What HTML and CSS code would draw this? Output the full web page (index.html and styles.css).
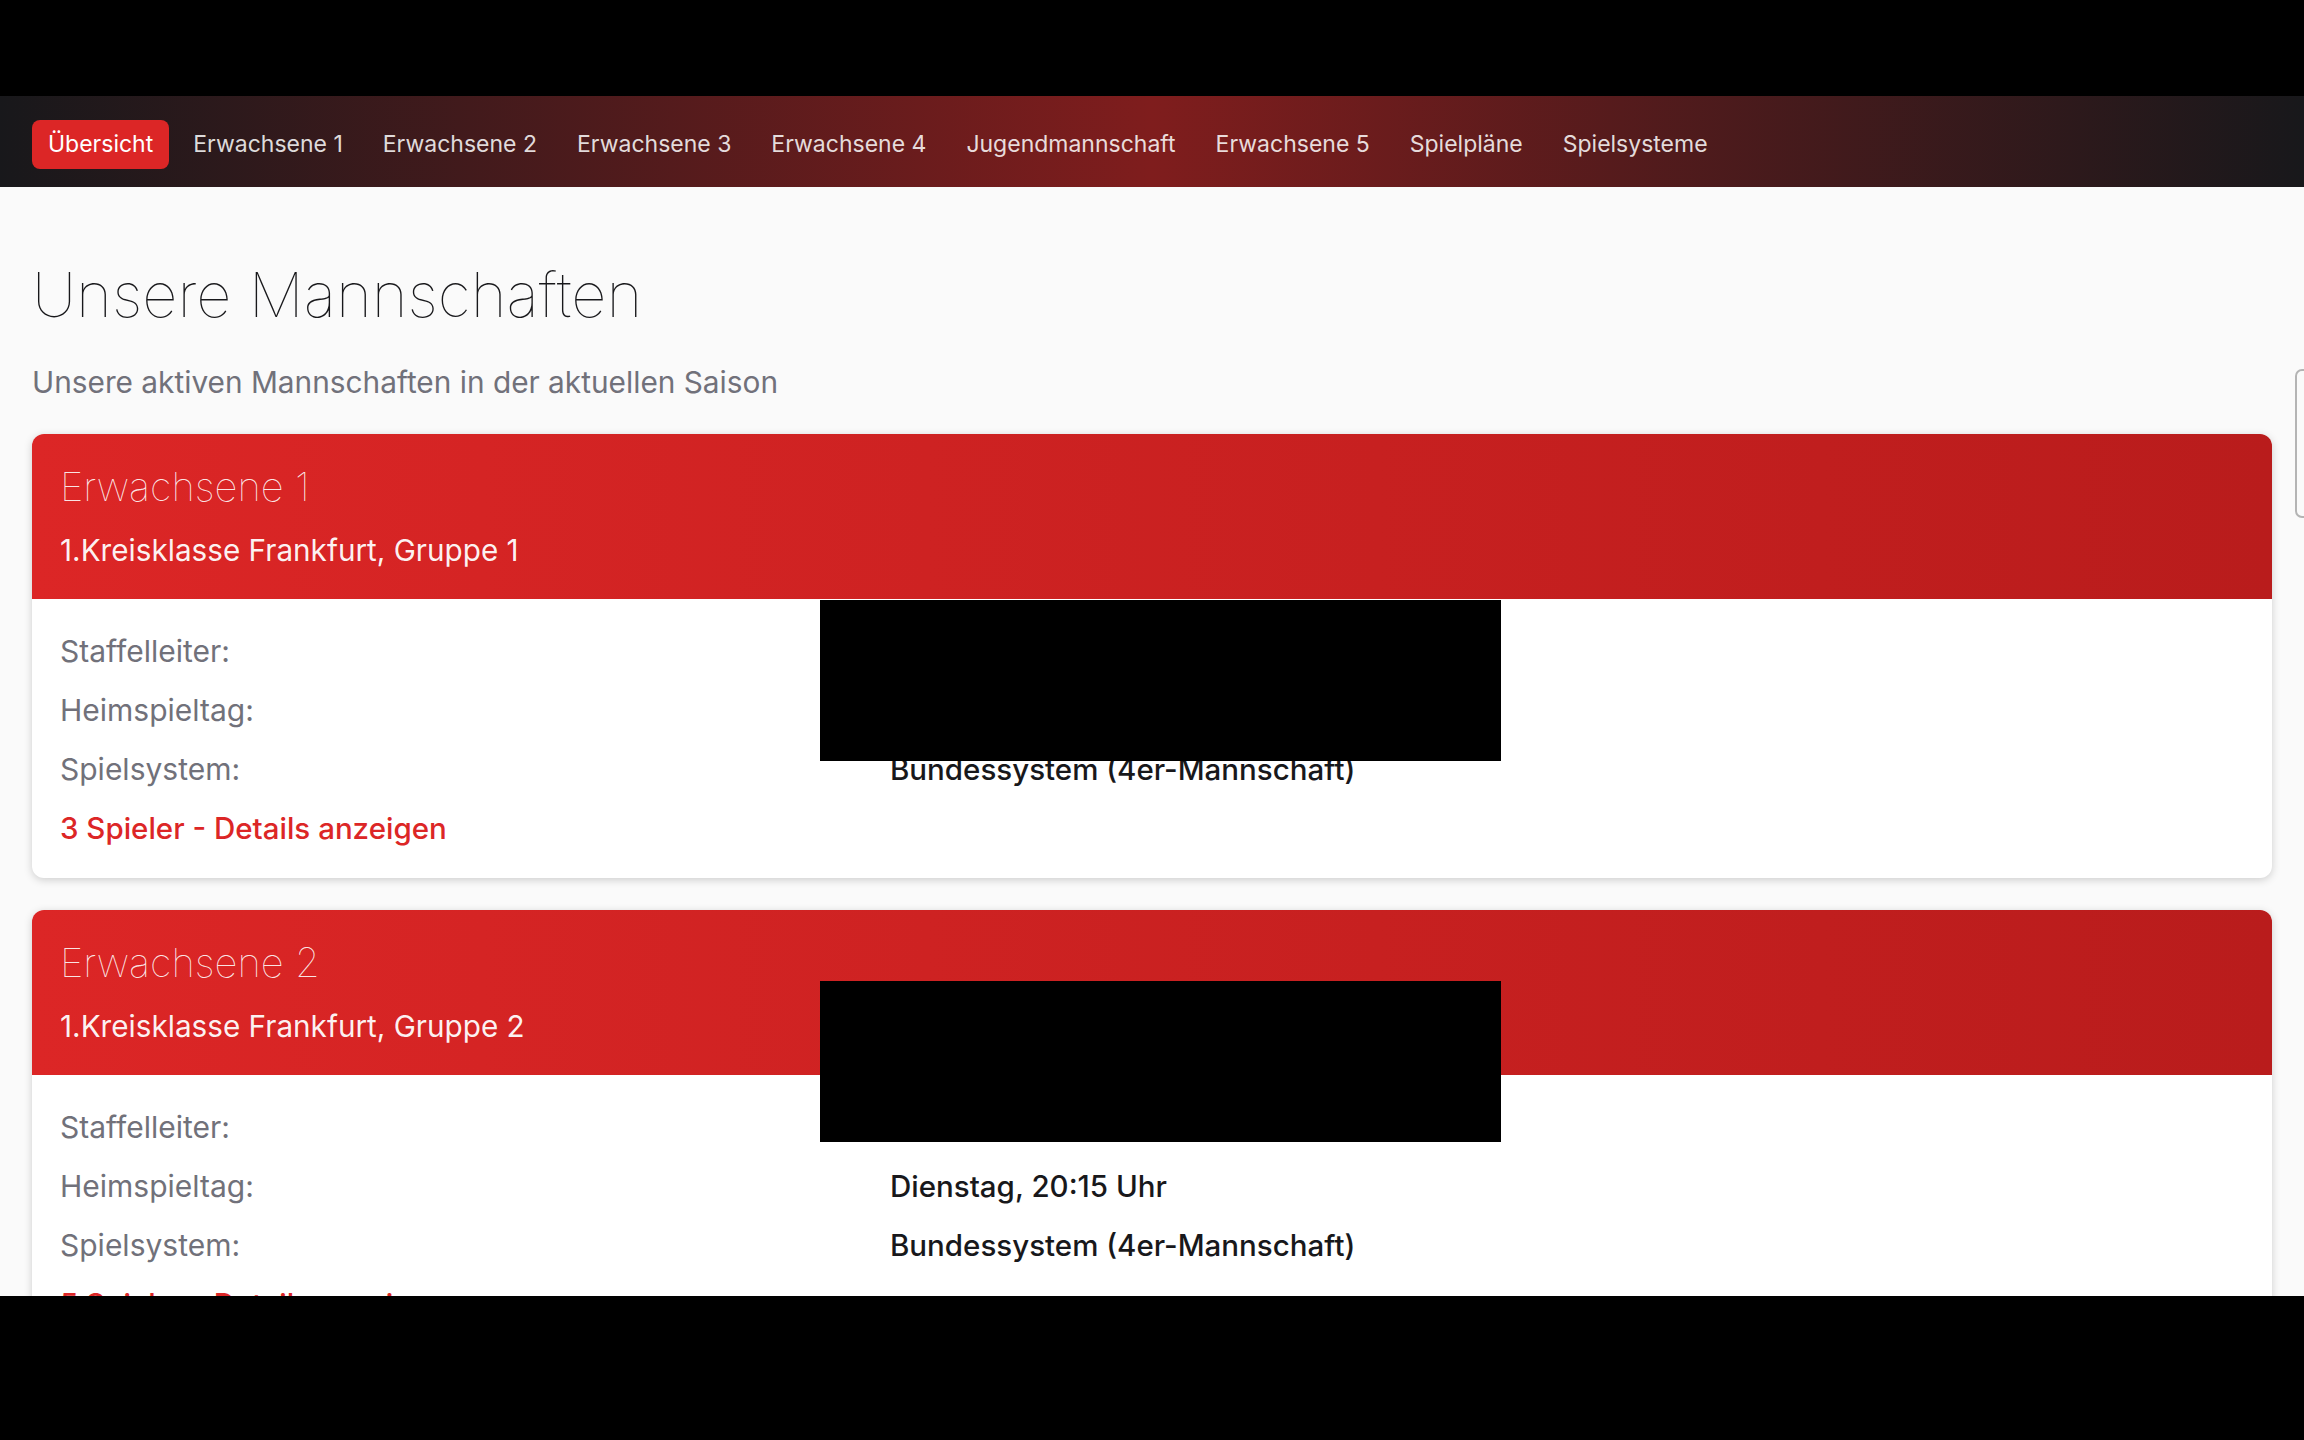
FILE: index.html
```html
<!DOCTYPE html>
<html lang="de">
<head>
  <meta charset="UTF-8" />
  <meta name="viewport" content="width=device-width, initial-scale=1.0" />
  <title>Unsere Mannschaften</title>
  <link rel="stylesheet" href="styles.css">
</head>
<body>
  <div class="topbar"></div>
  <nav class="mainnav">
    <a href="#" class="nav-link active">Übersicht</a>
    <a href="#" class="nav-link">Erwachsene 1</a>
    <a href="#" class="nav-link">Erwachsene 2</a>
    <a href="#" class="nav-link">Erwachsene 3</a>
    <a href="#" class="nav-link">Erwachsene 4</a>
    <a href="#" class="nav-link">Jugendmannschaft</a>
    <a href="#" class="nav-link">Erwachsene 5</a>
    <a href="#" class="nav-link">Spielpläne</a>
    <a href="#" class="nav-link">Spielsysteme</a>
  </nav>

  <main class="content">
    <h1>Unsere Mannschaften</h1>
    <p class="lead">Unsere aktiven Mannschaften in der aktuellen Saison</p>

    <div class="team-list">
      <div class="team-card">
        <div class="team-head">
          <h2>Erwachsene 1</h2>
          <div class="league">1.Kreisklasse Frankfurt, Gruppe 1</div>
        </div>
        <div class="team-body">
          <div class="info-row"><span class="label">Staffelleiter:</span><span class="value"></span></div>
          <div class="info-row"><span class="label">Heimspieltag:</span><span class="value"></span></div>
          <div class="info-row"><span class="label">Spielsystem:</span><span class="value">Bundessystem (4er-Mannschaft)</span></div>
          <a href="#" class="players-link">3 Spieler - Details anzeigen</a>
        </div>
        <div class="redact redact-body"></div>
      </div>

      <div class="team-card">
        <div class="team-head">
          <h2>Erwachsene 2</h2>
          <div class="league">1.Kreisklasse Frankfurt, Gruppe 2</div>
        </div>
        <div class="team-body">
          <div class="info-row"><span class="label">Staffelleiter:</span><span class="value"></span></div>
          <div class="info-row"><span class="label">Heimspieltag:</span><span class="value">Dienstag, 20:15 Uhr</span></div>
          <div class="info-row"><span class="label">Spielsystem:</span><span class="value">Bundessystem (4er-Mannschaft)</span></div>
          <a href="#" class="players-link">5 Spieler - Details anzeigen</a>
        </div>
        <div class="redact redact-head"></div>
      </div>
    </div>
  </main>

  <div class="side-tab"></div>
  <div class="bottombar"></div>
</body>
</html>
```

FILE: styles.css
```css
* { margin: 0; padding: 0; box-sizing: border-box; font-family: 'Inter', 'Noto Sans', sans-serif; }
html, body { overflow: hidden; }
body {
  background: #fafafa;
  color: #18181b;
  min-height: 100vh;
}
a { text-decoration: none; }

.topbar { height: 96px; background: #000; }
.bottombar {
  position: fixed;
  left: 0;
  right: 0;
  bottom: 0;
  height: 144px;
  background: #000;
}

.mainnav {
  height: 91px;
  display: flex;
  align-items: center;
  gap: 8px;
  padding: 6px 32px 0;
  background: linear-gradient(90deg, #18181b 0%, #7f1d1d 50%, #18181b 100%);
}
.nav-link {
  font-size: 23px;
  line-height: 33px;
  padding: 8px 16px;
  border-radius: 8px;
  color: rgba(255, 255, 255, 0.85);
}
.nav-link.active { background: #dc2626; color: #fff; }

.content { padding: 72px 32px 0; }
h1 {
  font-size: 61.4px;
  line-height: 72px;
  font-weight: 100;
  color: #18181b;
  margin-bottom: 31px;
}
.lead {
  font-size: 29.8px;
  line-height: 40px;
  color: #71717a;
  margin-bottom: 32px;
}

.team-list { display: flex; flex-direction: column; gap: 32px; }
.team-card {
  position: relative;
  background: #fff;
  border-radius: 12px;
  overflow: hidden;
  box-shadow: 0 2px 8px rgba(0, 0, 0, 0.18);
}
.team-head {
  height: 165px;
  padding: 29px 28px 0;
  background: linear-gradient(90deg, #dc2626, #b91c1c);
}
.team-head h2 {
  font-size: 40px;
  line-height: 48px;
  font-weight: 100;
  color: rgba(255, 255, 255, 0.9);
  margin-bottom: 17px;
}
.league {
  font-size: 29.7px;
  line-height: 45px;
  color: rgba(255, 255, 255, 0.94);
}

.team-body {
  display: flex;
  flex-direction: column;
  gap: 15px;
  padding: 30px 28px 28px;
}
.info-row {
  display: grid;
  grid-template-columns: 830px 1fr;
  font-size: 30px;
  line-height: 44px;
}
.label { color: #71717a; }
.value { color: #18181b; font-weight: 500; font-size: 29.5px; }
.players-link {
  font-size: 29.5px;
  line-height: 44px;
  font-weight: 500;
  color: #dc2626;
}

/* black boxes laid over hidden contact data */
.redact { position: absolute; left: 788px; width: 681px; height: 161px; background: #000; }
.redact-body { top: 166px; }
.redact-head { top: 71px; }

.side-tab {
  position: fixed;
  top: 369px;
  left: 2295px;
  width: 40px;
  height: 149px;
  border: 2px solid #b4b4b4;
  border-radius: 7px;
}
```
